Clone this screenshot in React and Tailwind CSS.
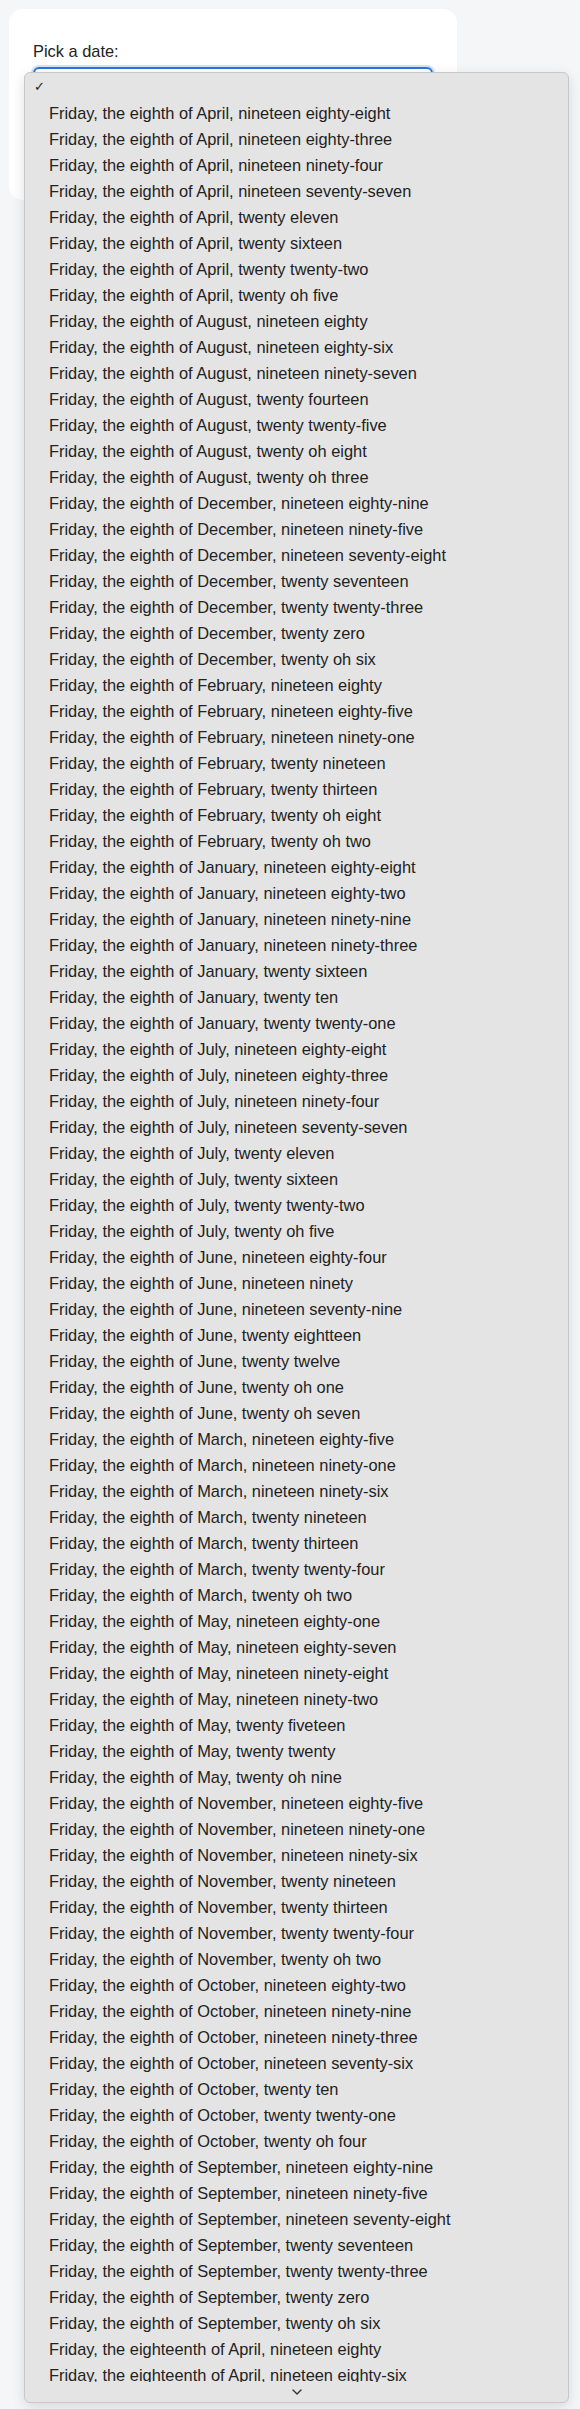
import React from 'react';

const dates = [
  'Friday, the eighth of April, nineteen eighty-eight',
  'Friday, the eighth of April, nineteen eighty-three',
  'Friday, the eighth of April, nineteen ninety-four',
  'Friday, the eighth of April, nineteen seventy-seven',
  'Friday, the eighth of April, twenty eleven',
  'Friday, the eighth of April, twenty sixteen',
  'Friday, the eighth of April, twenty twenty-two',
  'Friday, the eighth of April, twenty oh five',
  'Friday, the eighth of August, nineteen eighty',
  'Friday, the eighth of August, nineteen eighty-six',
  'Friday, the eighth of August, nineteen ninety-seven',
  'Friday, the eighth of August, twenty fourteen',
  'Friday, the eighth of August, twenty twenty-five',
  'Friday, the eighth of August, twenty oh eight',
  'Friday, the eighth of August, twenty oh three',
  'Friday, the eighth of December, nineteen eighty-nine',
  'Friday, the eighth of December, nineteen ninety-five',
  'Friday, the eighth of December, nineteen seventy-eight',
  'Friday, the eighth of December, twenty seventeen',
  'Friday, the eighth of December, twenty twenty-three',
  'Friday, the eighth of December, twenty zero',
  'Friday, the eighth of December, twenty oh six',
  'Friday, the eighth of February, nineteen eighty',
  'Friday, the eighth of February, nineteen eighty-five',
  'Friday, the eighth of February, nineteen ninety-one',
  'Friday, the eighth of February, twenty nineteen',
  'Friday, the eighth of February, twenty thirteen',
  'Friday, the eighth of February, twenty oh eight',
  'Friday, the eighth of February, twenty oh two',
  'Friday, the eighth of January, nineteen eighty-eight',
  'Friday, the eighth of January, nineteen eighty-two',
  'Friday, the eighth of January, nineteen ninety-nine',
  'Friday, the eighth of January, nineteen ninety-three',
  'Friday, the eighth of January, twenty sixteen',
  'Friday, the eighth of January, twenty ten',
  'Friday, the eighth of January, twenty twenty-one',
  'Friday, the eighth of July, nineteen eighty-eight',
  'Friday, the eighth of July, nineteen eighty-three',
  'Friday, the eighth of July, nineteen ninety-four',
  'Friday, the eighth of July, nineteen seventy-seven',
  'Friday, the eighth of July, twenty eleven',
  'Friday, the eighth of July, twenty sixteen',
  'Friday, the eighth of July, twenty twenty-two',
  'Friday, the eighth of July, twenty oh five',
  'Friday, the eighth of June, nineteen eighty-four',
  'Friday, the eighth of June, nineteen ninety',
  'Friday, the eighth of June, nineteen seventy-nine',
  'Friday, the eighth of June, twenty eightteen',
  'Friday, the eighth of June, twenty twelve',
  'Friday, the eighth of June, twenty oh one',
  'Friday, the eighth of June, twenty oh seven',
  'Friday, the eighth of March, nineteen eighty-five',
  'Friday, the eighth of March, nineteen ninety-one',
  'Friday, the eighth of March, nineteen ninety-six',
  'Friday, the eighth of March, twenty nineteen',
  'Friday, the eighth of March, twenty thirteen',
  'Friday, the eighth of March, twenty twenty-four',
  'Friday, the eighth of March, twenty oh two',
  'Friday, the eighth of May, nineteen eighty-one',
  'Friday, the eighth of May, nineteen eighty-seven',
  'Friday, the eighth of May, nineteen ninety-eight',
  'Friday, the eighth of May, nineteen ninety-two',
  'Friday, the eighth of May, twenty fiveteen',
  'Friday, the eighth of May, twenty twenty',
  'Friday, the eighth of May, twenty oh nine',
  'Friday, the eighth of November, nineteen eighty-five',
  'Friday, the eighth of November, nineteen ninety-one',
  'Friday, the eighth of November, nineteen ninety-six',
  'Friday, the eighth of November, twenty nineteen',
  'Friday, the eighth of November, twenty thirteen',
  'Friday, the eighth of November, twenty twenty-four',
  'Friday, the eighth of November, twenty oh two',
  'Friday, the eighth of October, nineteen eighty-two',
  'Friday, the eighth of October, nineteen ninety-nine',
  'Friday, the eighth of October, nineteen ninety-three',
  'Friday, the eighth of October, nineteen seventy-six',
  'Friday, the eighth of October, twenty ten',
  'Friday, the eighth of October, twenty twenty-one',
  'Friday, the eighth of October, twenty oh four',
  'Friday, the eighth of September, nineteen eighty-nine',
  'Friday, the eighth of September, nineteen ninety-five',
  'Friday, the eighth of September, nineteen seventy-eight',
  'Friday, the eighth of September, twenty seventeen',
  'Friday, the eighth of September, twenty twenty-three',
  'Friday, the eighth of September, twenty zero',
  'Friday, the eighth of September, twenty oh six',
  'Friday, the eighteenth of April, nineteen eighty',
  'Friday, the eighteenth of April, nineteen eighty-six',
];

const App = () => {
  return (
    <div
      className="relative min-h-screen bg-[#f5f6f8] text-[#222] text-[16.4px]"
      style={{ fontFamily: '"Liberation Sans", Arial, sans-serif' }}
    >
      {/* Card */}
      <div className="pt-[9px] pl-[9px]">
        <div className="w-[448px] h-[191px] bg-white rounded-[14px] px-[24px] pt-[32px]">
          <label className="block leading-[20px] mb-[6px]">Pick a date:</label>
          <div className="h-[38px] rounded-md border-2 border-[#2b74de] ring-2 ring-[#2b74de]/20"></div>
        </div>
      </div>

      {/* Open listbox */}
      <div className="absolute left-[24px] top-[72px] w-[545px] h-[2331px] flex flex-col bg-[#e4e4e4] border border-[#c8c8c8] rounded-md shadow-[0_4px_14px_rgba(0,0,0,0.12)] overflow-hidden">
        <div className="flex-1 overflow-hidden pt-[1px]">
          <div className="h-[26px] flex items-center pl-[9px] text-[13px]">✓</div>
          {dates.map((d) => (
            <div key={d} className="h-[26px] flex items-center pl-[24px] whitespace-nowrap">
              {d}
            </div>
          ))}
        </div>
        <div className="h-[20px] shrink-0 flex items-center justify-center">
          <svg width="10" height="6" viewBox="0 0 10 6" fill="none">
            <path d="M1 1l4 4 4-4" stroke="#333" strokeWidth="1.4" strokeLinecap="round" strokeLinejoin="round" />
          </svg>
        </div>
      </div>
    </div>
  );
};

export default App;
